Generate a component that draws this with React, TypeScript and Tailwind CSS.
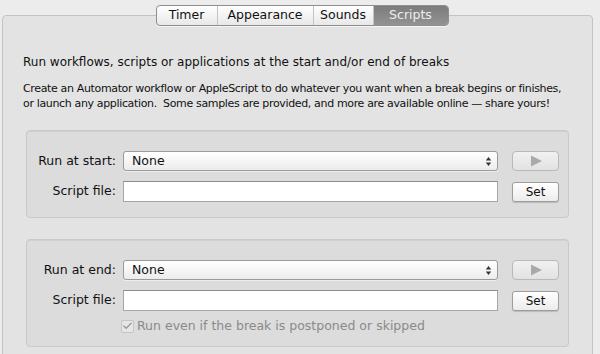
import { Check } from "lucide-react";

const font = { fontFamily: '"Lucida Grande", "DejaVu Sans", sans-serif' };

function Tabs() {
  const tabs = ["Timer", "Appearance", "Sounds", "Scripts"];
  return (
    <div className="flex h-[21px] overflow-hidden rounded-[4px] border border-[#8f8f8f] bg-gradient-to-b from-white to-[#e8e8e8] shadow-[0_1px_0_rgba(255,255,255,0.6)]">
      {tabs.map((t, i) => {
        const active = t === "Scripts";
        return (
          <div
            key={t}
            className={
              "flex items-center justify-center text-[12.5px] leading-none " +
              (i > 0 ? "border-l border-[#c4c4c4] " : "") +
              (active
                ? "w-[75px] bg-gradient-to-b from-[#7c7c7c] to-[#939393] text-[#eeeeee]"
                : i === 0
                ? "w-[60px] text-[#111]"
                : i === 1
                ? "w-[96px] text-[#111]"
                : "w-[60px] text-[#111]")
            }
          >
            {t}
          </div>
        );
      })}
    </div>
  );
}

function Popup() {
  return (
    <div className="flex h-[20px] w-[375px] items-center justify-between rounded-[3px] border border-[#9a9a9a] bg-gradient-to-b from-white to-[#ececec] pl-[8px] pr-[5px] shadow-[0_1px_0_rgba(255,255,255,0.5)]">
      <span className="text-[12.5px] text-[#111]">None</span>
      <svg width="7" height="11" viewBox="0 0 7 11">
        <path d="M3.5 1 L6.2 4.5 H0.8 Z" fill="#333" />
        <path d="M3.5 10 L6.2 6.5 H0.8 Z" fill="#333" />
      </svg>
    </div>
  );
}

function Field() {
  return <div className="h-[21px] w-[375px] border border-[#a6a6a6] border-t-[#8c8c8c] bg-white" />;
}

function PlayButton() {
  return (
    <div className="flex h-[20px] w-[47px] items-center justify-center rounded-[4px] border border-[#b9b9b9] bg-gradient-to-b from-[#f1f1f1] to-[#e2e2e2]">
      <svg width="14" height="12" viewBox="0 0 14 12">
        <path d="M2 0.5 L13 6 L2 11.5 Z" fill="#a9a9a9" />
      </svg>
    </div>
  );
}

function SetButton() {
  return (
    <div className="flex h-[20px] w-[47px] items-center justify-center rounded-[3px] border border-[#9d9d9d] bg-gradient-to-b from-white to-[#ececec] text-[12px] text-[#111] shadow-[0_1px_1px_rgba(0,0,0,0.15)]">
      Set
    </div>
  );
}

function Group({ label, end }: { label: string; end?: boolean }) {
  return (
    <div
      className={
        "mx-[23px] rounded-[4px] border border-[#c9c9c9] bg-[#dcdcdc] pl-[6px] pt-[20px] shadow-[inset_0_1px_0_rgba(0,0,0,0.05)] " +
        (end ? "pb-[10px]" : "pb-[15px]")
      }
    >
      <div className="flex items-center">
        <div className="w-[83px] whitespace-nowrap text-right text-[12.5px] text-[#111]">{label}</div>
        <div className="ml-[7px]">
          <Popup />
        </div>
        <div className="ml-[14px]">
          <PlayButton />
        </div>
      </div>
      <div className="mt-[10px] flex items-center">
        <div className="w-[83px] whitespace-nowrap text-right text-[12.5px] text-[#111]">Script file:</div>
        <div className="ml-[7px]">
          <Field />
        </div>
        <div className="ml-[14px]">
          <SetButton />
        </div>
      </div>
      {end ? (
        <div className="ml-[88px] mt-[6px] flex items-center gap-[3px] text-[12.5px] text-[#8a8a8a]">
          <span className="flex h-[13px] w-[13px] items-center justify-center rounded-[2px] border border-[#c4c4c4] bg-[#e6e6e6]">
            <Check size={12} strokeWidth={3} className="text-[#9a9a9a]" />
          </span>
          <span>Run even if the break is postponed or skipped</span>
        </div>
      ) : null}
    </div>
  );
}

export default function App() {
  return (
    <div className="relative h-[354px] w-[600px] overflow-hidden bg-[#ececec]" style={font}>
      <div className="absolute left-[2px] right-[7px] top-[15px] h-[360px] rounded-[4px] border border-[#c3c3c3] bg-[#e3e3e3]">
        <div className="whitespace-nowrap pl-[20px] pt-[37px] text-[12px] text-[#111]">
          Run workflows, scripts or applications at the start and/or end of breaks
        </div>
        <div className="whitespace-nowrap pl-[20px] pt-[10px] text-[11px] leading-[15px] tracking-[-0.35px] text-[#111]">
          Create an Automator workflow or AppleScript to do whatever you want when a break begins or finishes,
          <br />
          or launch any application.&nbsp; Some samples are provided, and more are available online — share yours!
        </div>
        <div className="mt-[19px] flex flex-col gap-[21px]">
          <Group label="Run at start:" />
          <Group label="Run at end:" end />
        </div>
      </div>
      <div className="absolute left-0 right-0 top-[5px] flex justify-center">
        <div className="ml-[4px]">
          <Tabs />
        </div>
      </div>
    </div>
  );
}
